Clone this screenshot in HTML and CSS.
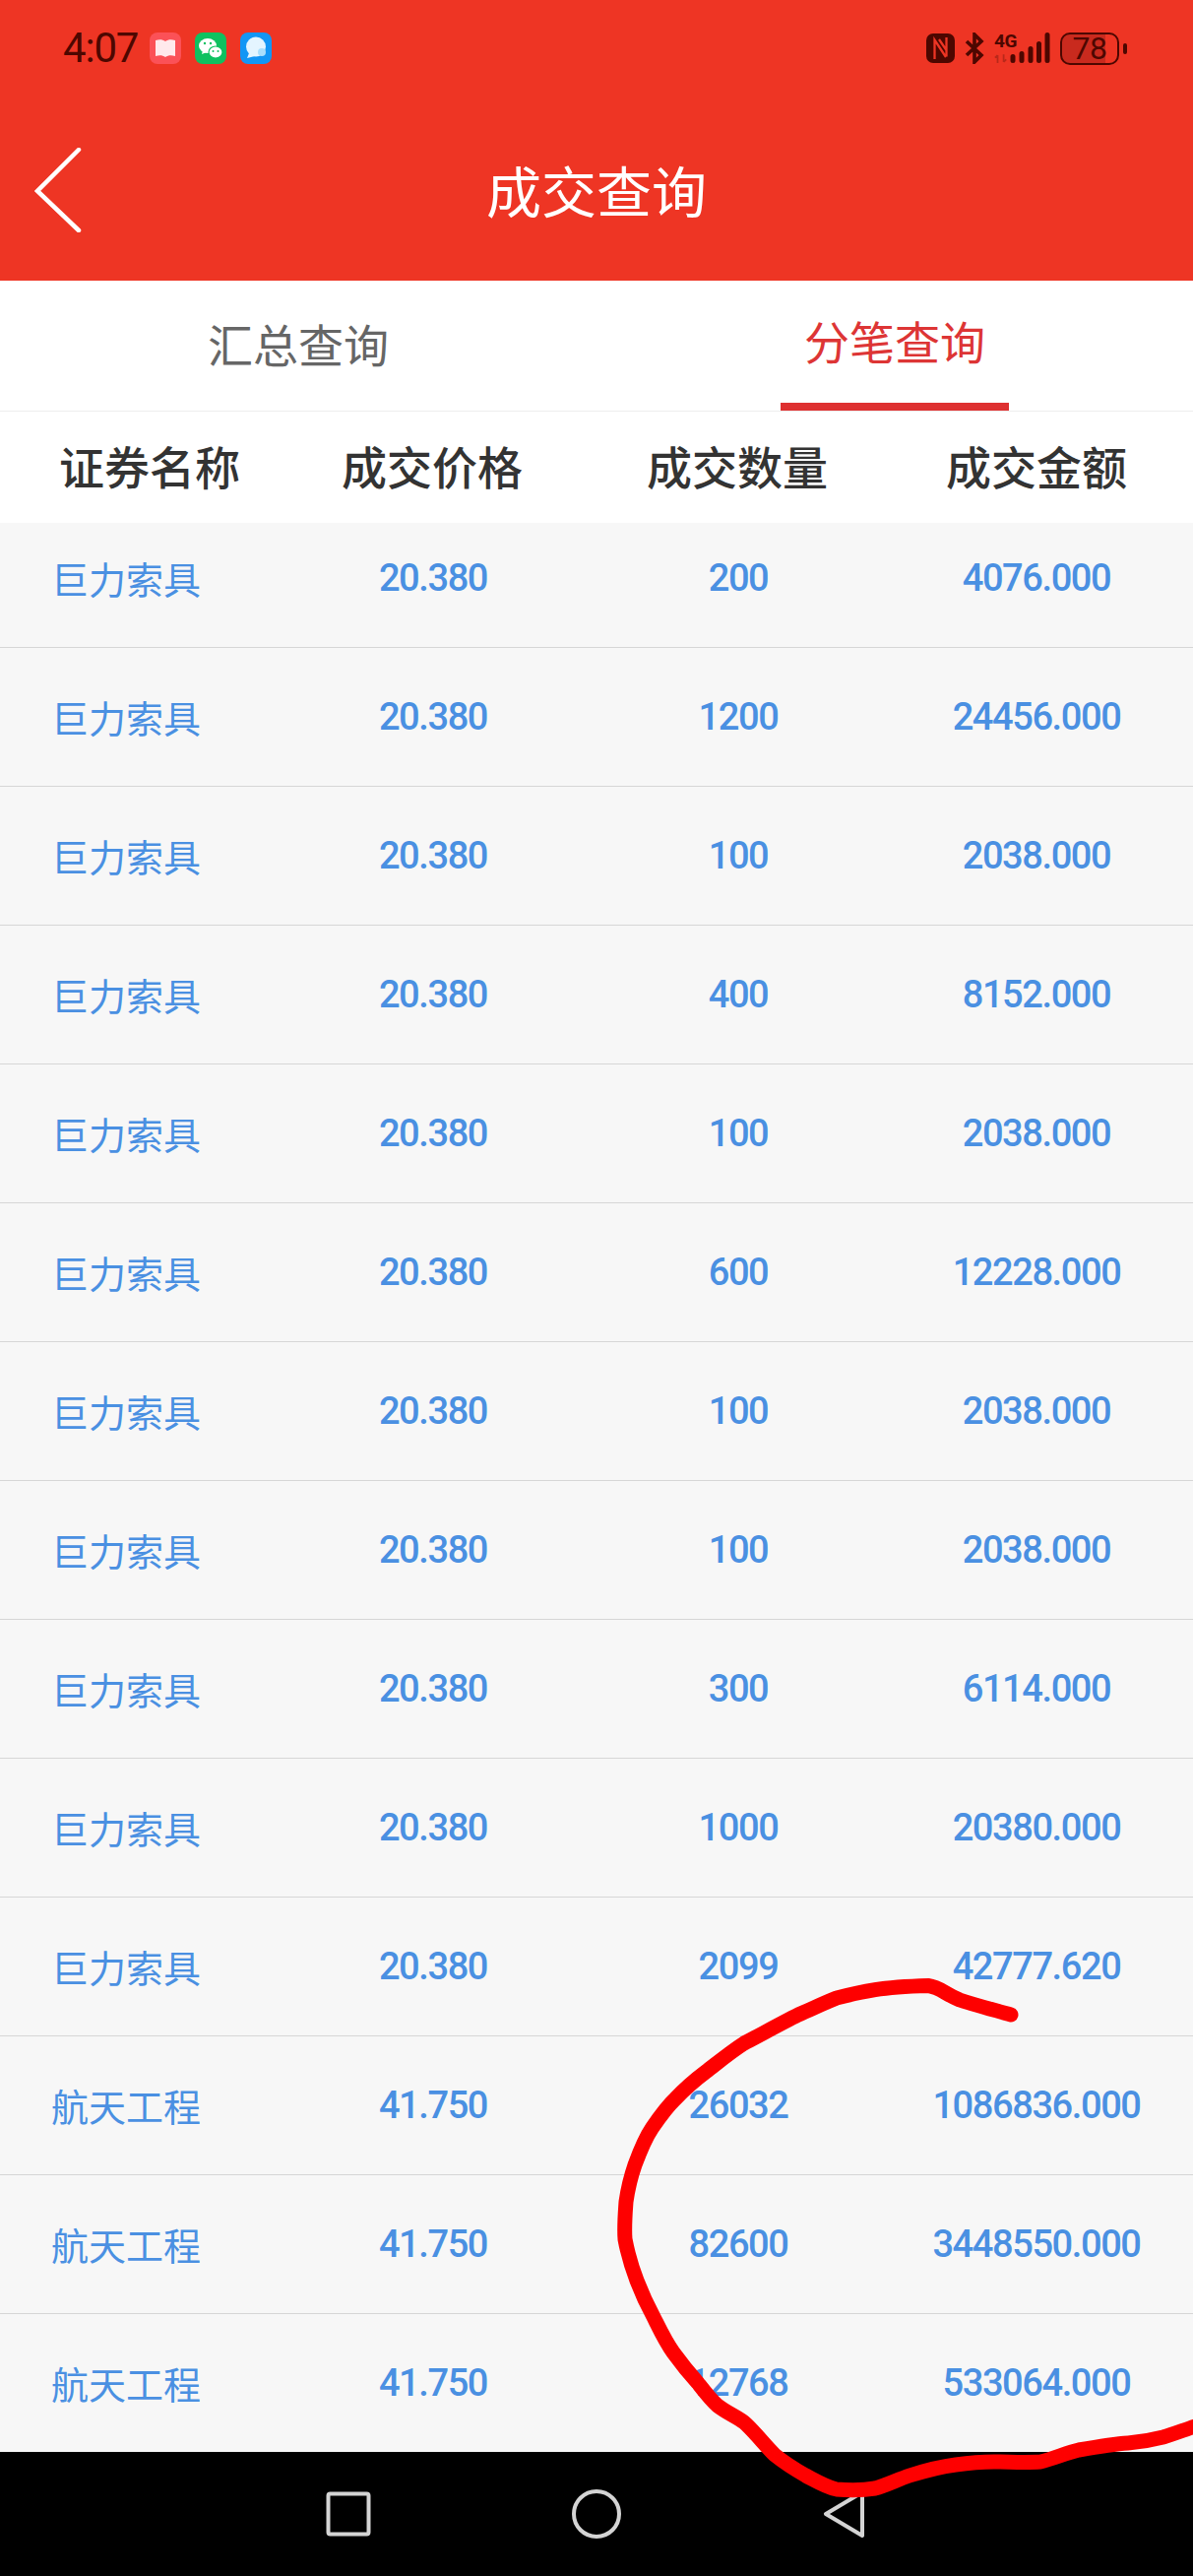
FILE: index.html
```html
<!DOCTYPE html>
<html lang="zh-CN">
<head>
<meta charset="utf-8">
<title>成交查询</title>
<link rel="stylesheet" href="styles.css">
</head>
<body>
<div class="screen">
  <header class="top">
    <div class="status">
      <div class="status-left">
        <span class="time">4:07</span>
        <svg class="app" viewBox="0 0 32 32"><rect width="32" height="32" rx="8" fill="#fb5157"/><path d="M6 8c4-1 7-1 10 1 3-2 6-2 10-1v16c-4-1-7-1-10 1-3-2-6-2-10-1z" fill="#ffe9ec"/></svg>
        <svg class="app" viewBox="0 0 32 32"><rect width="32" height="32" rx="8" fill="#0fc160"/><ellipse cx="13" cy="13.5" rx="9" ry="7.5" fill="#fff"/><path d="M8 18l-1 4 5-2z" fill="#fff"/><ellipse cx="21" cy="20" rx="7" ry="6" fill="#fff" stroke="#0fc160" stroke-width="1.2"/><circle cx="10" cy="11" r="1.2" fill="#0fc160"/><circle cx="16" cy="11" r="1.2" fill="#0fc160"/><circle cx="18.500" cy="19" r="1" fill="#0fc160"/><circle cx="23.500" cy="19" r="1" fill="#0fc160"/></svg>
        <svg class="app" viewBox="0 0 32 32"><rect width="32" height="32" rx="8" fill="#1296f5"/><circle cx="16" cy="14.500" r="10" fill="#e4f5ff"/><path d="M9 21l-2 5 8-2z" fill="#e4f5ff"/><circle cx="22" cy="20" r="4" fill="#a9defc"/></svg>
      </div>
      <div class="status-right">
        <svg class="ic-nfc" viewBox="0 0 29 30"><rect width="29" height="30" rx="7" fill="#4d0700"/><path d="M8.500 26V6.500L20 24M20.500 4v19.500M13 6l7.500 11" fill="none" stroke="#ee3524" stroke-width="2.300"/></svg>
        <svg class="ic-bt" viewBox="0 0 20 32"><path d="M2 9l15 14-7 7V2l7 7L2 23" fill="none" stroke="#4d0700" stroke-width="3.600"/></svg>
        <div class="net">
          <span class="net-label">4G</span>
          <svg class="net-arrows" viewBox="0 0 16 10"><path d="M4 10V1M1 4l3-3M11 0v9M11 9l3-3" stroke="#b9281a" stroke-width="2" fill="none"/></svg>
        </div>
        <svg class="bars" viewBox="0 0 42 32"><path d="M3 28.500v-4M12 28.500v-7M21 28.500v-12M29.500 28.500v-17M38 28.500V2.500" stroke="#4d0700" stroke-width="5" stroke-linecap="round" fill="none"/></svg>
        <div class="battery"><span class="battery-num">78</span></div>
        <span class="battery-tip"></span>
      </div>
    </div>
    <div class="nav">
      <svg class="back" viewBox="0 0 50 86"><path d="M45 2L3 44l42 40" fill="none" stroke="#fff" stroke-width="4.500" stroke-linecap="round"/></svg>
      <h1 class="title">成交查询</h1>
    </div>
  </header>

  <div class="tabs">
    <div class="tab">汇总查询</div>
    <div class="tab tab-on">分笔查询</div>
  </div>

  <div class="thead">
    <div>证券名称</div><div>成交价格</div><div>成交数量</div><div>成交金额</div>
  </div>

  <div class="list">
    <div class="row row-first"><div class="name">巨力索具</div><div>20.380</div><div>200</div><div>4076.000</div></div>
    <div class="row"><div class="name">巨力索具</div><div>20.380</div><div>1200</div><div>24456.000</div></div>
    <div class="row"><div class="name">巨力索具</div><div>20.380</div><div>100</div><div>2038.000</div></div>
    <div class="row"><div class="name">巨力索具</div><div>20.380</div><div>400</div><div>8152.000</div></div>
    <div class="row"><div class="name">巨力索具</div><div>20.380</div><div>100</div><div>2038.000</div></div>
    <div class="row"><div class="name">巨力索具</div><div>20.380</div><div>600</div><div>12228.000</div></div>
    <div class="row"><div class="name">巨力索具</div><div>20.380</div><div>100</div><div>2038.000</div></div>
    <div class="row"><div class="name">巨力索具</div><div>20.380</div><div>100</div><div>2038.000</div></div>
    <div class="row"><div class="name">巨力索具</div><div>20.380</div><div>300</div><div>6114.000</div></div>
    <div class="row"><div class="name">巨力索具</div><div>20.380</div><div>1000</div><div>20380.000</div></div>
    <div class="row"><div class="name">巨力索具</div><div>20.380</div><div>2099</div><div>42777.620</div></div>
    <div class="row"><div class="name">航天工程</div><div>41.750</div><div>26032</div><div>1086836.000</div></div>
    <div class="row"><div class="name">航天工程</div><div>41.750</div><div>82600</div><div>3448550.000</div></div>
    <div class="row row-last"><div class="name">航天工程</div><div>41.750</div><div>12768</div><div>533064.000</div></div>
  </div>

  <nav class="sysnav">
    <svg class="sys-sq" viewBox="0 0 46 46"><rect x="2.500" y="2.500" width="41" height="41" rx="2" fill="none" stroke="#d4d4d4" stroke-width="4"/></svg>
    <svg class="sys-ci" viewBox="0 0 50 50"><circle cx="25" cy="25" r="23" fill="none" stroke="#d4d4d4" stroke-width="4"/></svg>
    <svg class="sys-tr" viewBox="0 0 44 50"><path d="M40 3L3 25l37 22z" fill="none" stroke="#d4d4d4" stroke-width="4" stroke-linejoin="round"/></svg>
  </nav>

  <svg class="scribble" viewBox="0 0 1212 2616">
    <path d="M1027 2046C1005 2040 990 2036 975 2031C960 2025 955 2018 943 2016.500C925 2017 905 2018 889 2020.700C875 2023 862 2026 850 2029C835 2035 825 2040 811 2046C795 2054 775 2065 756 2075C742 2084 730 2094 717 2104C705 2113 695 2122 686 2131.500C677 2140 670 2150 662.500 2161C655 2172 650 2185 645 2198.500C641 2210 638 2222 636 2236C635 2250 634 2262 635 2274C638 2290 642 2303 647 2316C652 2329 658 2342 664 2353C670 2365 676 2378 684 2389C692 2400 700 2410 709 2420C716 2429 722 2437 729 2443C738 2450 748 2454 756 2460C767 2470 777 2483 787 2493C797 2501 808 2508 818.600 2514C830 2520 840 2526 850 2528C863 2529 877 2529 889 2527C900 2524 912 2518 924 2514C940 2509 955 2505 971 2503C985 2501 998 2500 1010 2500C1025 2500 1042 2501 1057 2500C1070 2497 1083 2491 1096 2488C1113 2485 1130 2482 1146 2481C1158 2480 1170 2478 1181.600 2475C1192 2472 1202 2468 1214 2464" fill="none" stroke="#fe0000" stroke-width="15" stroke-linecap="round" stroke-linejoin="round"/>
  </svg>
</div>
</body>
</html>
```

FILE: styles.css
```css
* { box-sizing: border-box; }
html, body { margin: 0; padding: 0; }
body { font-family: "Noto Sans CJK SC", "Noto Sans", sans-serif; background: #000; }

.screen { position: relative; width: 1212px; height: 2616px; overflow: hidden; display: flex; flex-direction: column; background: #f7f7f7; }

.top { height: 285px; background: #ee3524; flex: none; }
.status { height: 98px; padding: 0 67px 0 64px; display: flex; align-items: center; justify-content: space-between; }
.status-left { display: flex; align-items: center; }
.time { font-family: Roboto, sans-serif; font-size: 42px; letter-spacing: -1.200px; color: #4d0700; width: 88px; line-height: 50px; }
.app { width: 32px; height: 32px; margin-right: 14px; display: block; }
.status-right { display: flex; align-items: center; }
.ic-nfc { width: 29px; height: 30px; margin-right: 10px; display: block; }
.ic-bt { width: 20px; height: 32px; margin-right: 10px; display: block; }
.net { width: 16px; height: 32px; display: flex; flex-direction: column; justify-content: space-between; }
.net-label { font-family: Roboto, sans-serif; font-size: 19px; font-weight: 700; line-height: 18px; letter-spacing: -0.500px; color: #4d0700; white-space: nowrap; }
.net-arrows { width: 14px; height: 9px; display: block; margin-bottom: 1px; }
.bars { width: 42px; height: 32px; margin-right: 9px; display: block; }
.battery { width: 60px; height: 33px; border: 2.600px solid #4d0700; border-radius: 10px; background: linear-gradient(90deg, #c92a1e 78%, transparent 78%); display: flex; align-items: center; justify-content: center; }
.battery-num { font-family: Roboto, sans-serif; font-size: 32px; line-height: 36px; letter-spacing: -0.500px; color: #4d0700; }
.battery-tip { width: 4px; height: 11px; margin-left: 4px; border-radius: 2px; background: #4d0700; }

.nav { height: 187px; padding: 0 35px; display: grid; grid-template-columns: 1fr auto 1fr; align-items: center; }
.back { width: 50px; height: 86px; display: block; margin-top: 2px; }
.title { grid-column: 2; margin: 0; font-size: 56px; font-weight: 400; color: #fff; line-height: 70px; }

.tabs { height: 133px; background: #fff; border-bottom: 1px solid #eeeeee; display: grid; grid-template-columns: 1fr 1fr; flex: none; }
.tab { display: flex; align-items: center; justify-content: center; font-size: 46px; color: #666; padding-bottom: 6px; }
.tab-on { color: #dd3535; position: relative; padding-bottom: 12px; }
.tab-on::after { content: ""; position: absolute; left: 187px; width: 232px; bottom: 0; height: 8px; background: #de3030; }

.thead { height: 113px; background: #fff; display: grid; grid-template-columns: 304px 270px 350px 258px; padding: 0 30px 5px 0; align-items: center; text-align: center; font-size: 46px; font-weight: 500; color: #333; flex: none; }

.list { flex: 1; }
.row { height: 141px; display: grid; grid-template-columns: 274px 332px 288px 318px; align-items: center; text-align: center; border-bottom: 1px solid #d6d6d6; font-family: Roboto, sans-serif; font-size: 38px; letter-spacing: -1.400px; font-weight: 500; color: #4a90e2; line-height: 46px; }
.row-first { height: 127px; align-items: end; padding-bottom: 47px; }
.row-last { border-bottom: 0; height: 140px; }
.name { font-family: "Noto Sans CJK SC", sans-serif; font-size: 38px; font-weight: 400; letter-spacing: 0; padding-right: 18px; }

.sysnav { height: 126px; background: #000; flex: none; position: relative; }
.sysnav svg { position: absolute; display: block; }
.sys-sq { left: 331px; top: 40px; width: 46px; height: 46px; }
.sys-ci { left: 581px; top: 38px; width: 50px; height: 50px; }
.sys-tr { left: 836px; top: 38px; width: 44px; height: 50px; }

.scribble { position: absolute; left: 0; top: 0; width: 1212px; height: 2616px; pointer-events: none; }
```
